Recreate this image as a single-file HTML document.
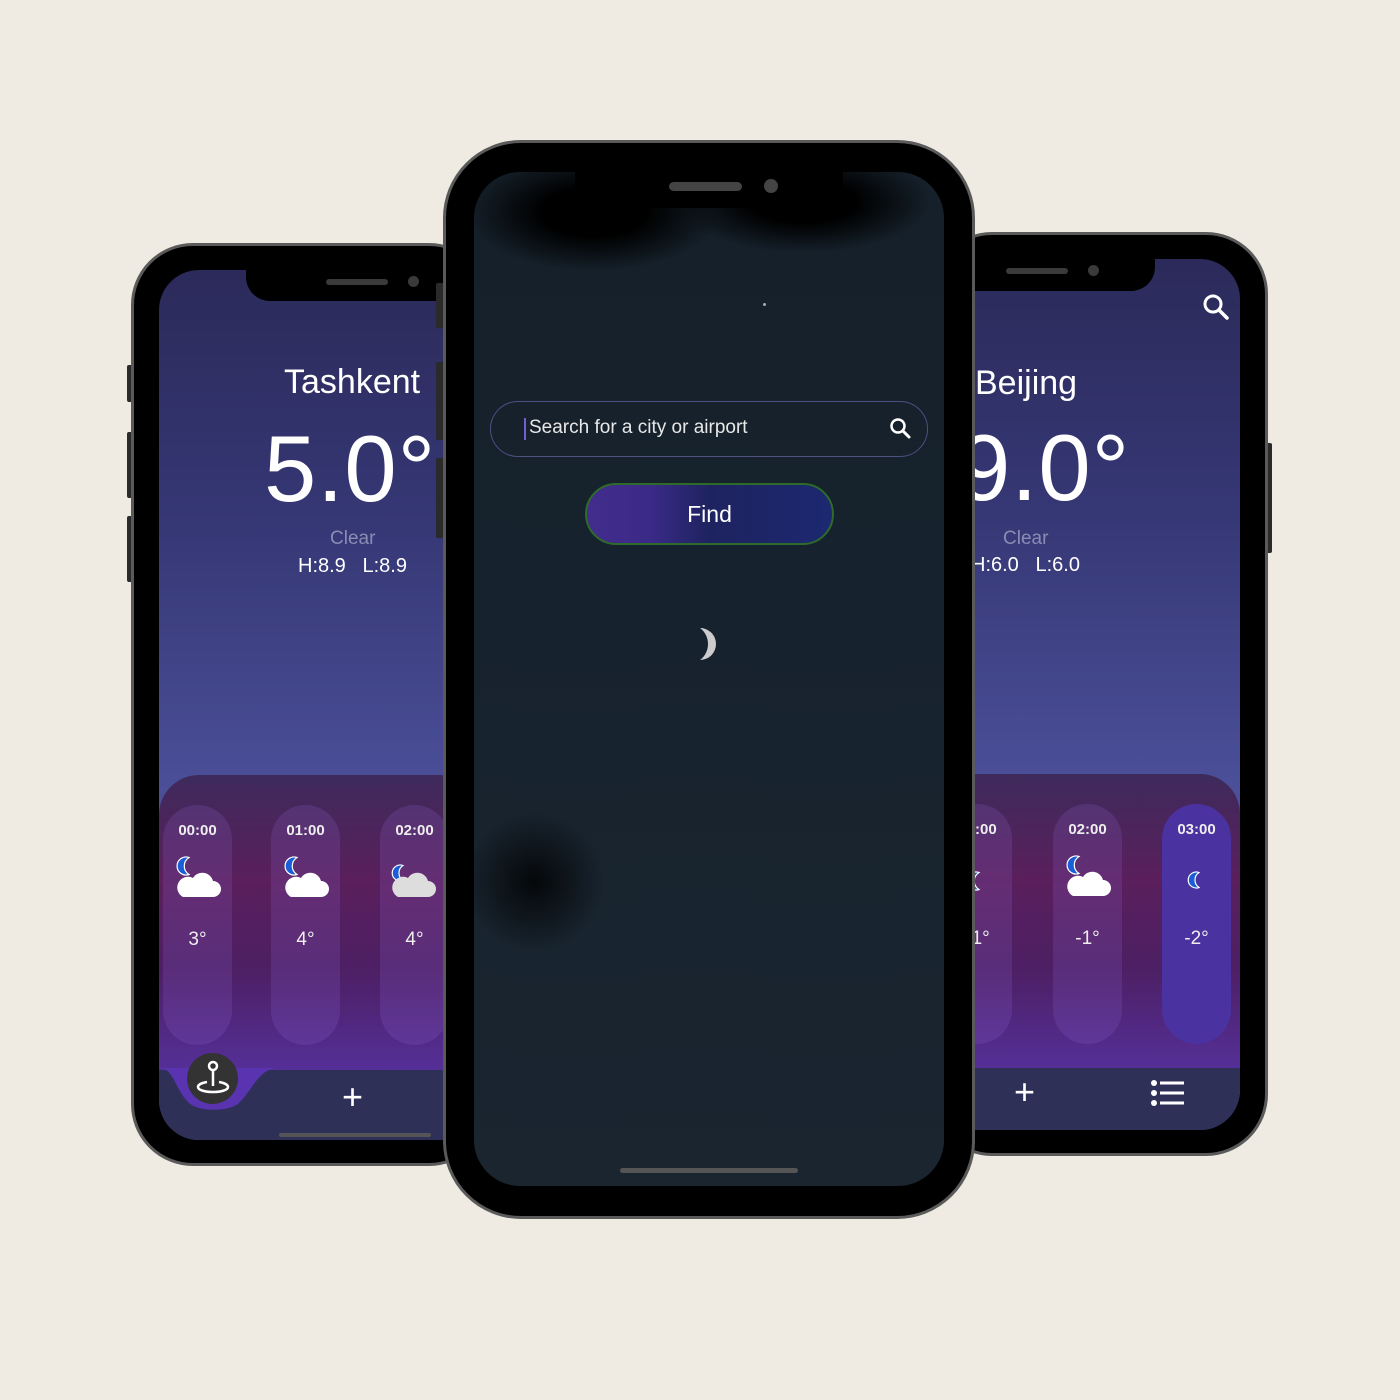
<!DOCTYPE html>
<html><head><style>
*{margin:0;padding:0;box-sizing:border-box}
body{width:1400px;height:1400px;background:#efebe3;position:relative;overflow:hidden;font-family:"Liberation Sans",sans-serif;color:#fff}
.a{position:absolute}
.phone{position:absolute;background:#000;border:3px solid #5a5a5a}
.scr{position:absolute;overflow:hidden}
.sky{background:linear-gradient(180deg,#2b2a5a 0%,#363876 30%,#4b4f98 60%,#5a60ae 100%)}
.notch{position:absolute;background:#000;border-radius:0 0 24px 24px}
.panel{position:absolute;border-radius:40px 40px 0 0;background:linear-gradient(180deg,#3e2a5c 0%,#5a1f5c 35%,#4d1f64 65%,#55309a 100%)}
.card{position:absolute;width:69px;height:240px;border-radius:35px;background:rgba(150,110,220,0.18);text-align:center}
.card .t{margin-top:17px;font-size:15px;font-weight:bold;color:#eee}
.card .d{position:absolute;top:124px;width:100%;font-size:19px;color:#eee}
.tab{position:absolute;background:#2e3058}
.btn{position:absolute;background:#2a2a2a;border-radius:2px}
</style></head><body>

<div class="btn" style="left:127px;top:365px;width:7px;height:37px"></div>
<div class="btn" style="left:127px;top:432px;width:7px;height:66px"></div>
<div class="btn" style="left:127px;top:516px;width:7px;height:66px"></div>
<div class="btn" style="left:1265px;top:443px;width:7px;height:110px"></div>

<!-- LEFT PHONE -->
<div class="phone" style="left:131px;top:243px;width:360px;height:923px;border-radius:62px"></div>
<div class="scr sky" style="left:159px;top:270px;width:320px;height:870px;border-radius:40px 0 0 40px">
  <div class="notch" style="left:87px;top:0;width:230px;height:31px"></div>
  <div class="a" style="left:167px;top:9px;width:62px;height:6px;border-radius:3px;background:#3a3a3a"></div>
  <div class="a" style="left:249px;top:6px;width:11px;height:11px;border-radius:50%;background:#3a3a3a"></div>
  <div class="a" style="left:125px;top:93px;font-size:34px">Tashkent</div>
  <div class="a" style="left:105px;top:145px;font-size:94px;font-weight:300;letter-spacing:1px">5.0°</div>
  <div class="a" style="left:171px;top:258px;font-size:19px;color:#8a8cb4">Clear</div>
  <div class="a" style="left:139px;top:285px;font-size:20px">H:8.9&nbsp;&nbsp;&nbsp;L:8.9</div>
  <div class="panel" style="left:0;top:505px;width:340px;height:300px">
    <div class="card" style="left:4px;top:30px"><div class="t">00:00</div><svg class="a" style="left:10px;top:50px" width="50" height="45"><path d="M16 2.5A9 9 0 1 0 16 19.5A10 10 0 0 1 16 2.5z" fill="#1a5ed8" stroke="#fff" stroke-width="1.2"/><path d="M10 42h30a8 8 0 0 0 0-16a11 11 0 0 0-20-3a8 8 0 0 0-10 19z" fill="#fff"/></svg><div class="d">3°</div></div>
    <div class="card" style="left:112px;top:30px"><div class="t">01:00</div><svg class="a" style="left:10px;top:50px" width="50" height="45"><path d="M16 2.5A9 9 0 1 0 16 19.5A10 10 0 0 1 16 2.5z" fill="#1a5ed8" stroke="#fff" stroke-width="1.2"/><path d="M10 42h30a8 8 0 0 0 0-16a11 11 0 0 0-20-3a8 8 0 0 0-10 19z" fill="#fff"/></svg><div class="d">4°</div></div>
    <div class="card" style="left:221px;top:30px"><div class="t">02:00</div><svg class="a" style="left:8px;top:58px" width="50" height="40"><path d="M15 2.5A8 8 0 1 0 15 17.5A9 9 0 0 1 15 2.5z" fill="#1a5ed8" stroke="#fff" stroke-width="1.2"/><path d="M10 34h30a8 8 0 0 0 0-16a11 11 0 0 0-20-3a8 8 0 0 0-10 19z" fill="#ddd"/></svg><div class="d">4°</div></div>
  </div>
  <div class="tab" style="left:0;top:800px;width:340px;height:70px"></div>
  <svg class="a" style="left:0;top:798px" width="120" height="45"><path d="M0 0H120C100 0 95 20 80 35C70 44 40 44 30 35C15 20 15 0 0 0Z" fill="#5a34b0"/></svg>
  <div class="a" style="left:28px;top:783px;width:51px;height:51px;border-radius:50%;background:#333"></div>
  <svg class="a" style="left:36px;top:788px" width="36" height="40"><circle cx="18" cy="8" r="4" fill="none" stroke="#fff" stroke-width="2.5"/><path d="M18 12v16" stroke="#fff" stroke-width="2.5"/><path d="M12 24c-6 1-9 3-9 5c0 3 7 5 15 5s15-2 15-5c0-2-3-4-9-5" fill="none" stroke="#fff" stroke-width="2.5"/></svg>
  <div class="a" style="left:183px;top:806px;font-size:36px;font-weight:300">+</div>
  <div class="a" style="left:120px;top:863px;width:152px;height:4px;border-radius:2px;background:#555"></div>
</div>

<!-- RIGHT PHONE -->
<div class="phone" style="left:930px;top:232px;width:338px;height:924px;border-radius:62px"></div>
<div class="scr sky" style="left:950px;top:259px;width:290px;height:871px;border-radius:0 40px 40px 0">
  <div class="notch" style="left:0;top:0;width:205px;height:32px"></div>
  <div class="a" style="left:56px;top:9px;width:62px;height:6px;border-radius:3px;background:#3a3a3a"></div>
  <div class="a" style="left:138px;top:6px;width:11px;height:11px;border-radius:50%;background:#3a3a3a"></div>
  <svg class="a" style="left:252px;top:34px" width="28" height="28"><circle cx="11" cy="11" r="8" fill="none" stroke="#fff" stroke-width="3"/><path d="M17 17l8 8" stroke="#fff" stroke-width="3.5" stroke-linecap="round"/></svg>
  <div class="a" style="left:25px;top:105px;font-size:34px">Beijing</div>
  <div class="a" style="left:8px;top:155px;font-size:94px;font-weight:300;letter-spacing:1px">9.0°</div>
  <div class="a" style="left:53px;top:269px;font-size:19px;color:#8a8cb4">Clear</div>
  <div class="a" style="left:21px;top:295px;font-size:20px">H:6.0&nbsp;&nbsp;&nbsp;L:6.0</div>
  <div class="panel" style="left:-50px;top:515px;width:340px;height:300px">
    <div class="card" style="left:43px;top:30px"><div class="t">01:00</div><svg class="a" style="left:20px;top:66px" width="30" height="30"><path d="M16 2.5A9 9 0 1 0 16 19.5A10 10 0 0 1 16 2.5z" fill="#1a5ed8" stroke="#fff" stroke-width="1.2"/></svg><div class="d">-1°</div></div>
    <div class="card" style="left:153px;top:30px"><div class="t">02:00</div><svg class="a" style="left:10px;top:50px" width="50" height="45"><path d="M16 2.5A9 9 0 1 0 16 19.5A10 10 0 0 1 16 2.5z" fill="#1a5ed8" stroke="#fff" stroke-width="1.2"/><path d="M10 42h30a8 8 0 0 0 0-16a11 11 0 0 0-20-3a8 8 0 0 0-10 19z" fill="#fff"/></svg><div class="d">-1°</div></div>
    <div class="card" style="left:262px;top:30px;background:#4a32a0"><div class="t">03:00</div><svg class="a" style="left:22px;top:66px" width="30" height="30"><path d="M15 2.5A8 8 0 1 0 15 17.5A9 9 0 0 1 15 2.5z" fill="#1a5ed8" stroke="#fff" stroke-width="1.2"/></svg><div class="d">-2°</div></div>
  </div>
  <div class="tab" style="left:0;top:809px;width:290px;height:62px"></div>
  <div class="a" style="left:64px;top:812px;font-size:36px;font-weight:300">+</div>
  <svg class="a" style="left:200px;top:820px" width="36" height="30"><g fill="#fff"><circle cx="4" cy="4" r="3"/><circle cx="4" cy="14" r="3"/><circle cx="4" cy="24" r="3"/><rect x="10" y="2.5" width="24" height="3"/><rect x="10" y="12.5" width="24" height="3"/><rect x="10" y="22.5" width="24" height="3"/></g></svg>
</div>

<!-- CENTER PHONE -->
<div class="btn" style="left:436px;top:283px;width:8px;height:45px"></div>
<div class="btn" style="left:436px;top:362px;width:8px;height:78px"></div>
<div class="btn" style="left:436px;top:458px;width:8px;height:80px"></div>
<div class="phone" style="left:443px;top:140px;width:532px;height:1079px;border-radius:78px"></div>
<div class="scr" style="left:474px;top:172px;width:470px;height:1014px;border-radius:46px;background:linear-gradient(180deg,#15202a 0%,#16222d 40%,#1a2530 100%)">
  <div class="a" style="left:0;top:0;width:470px;height:130px;background:radial-gradient(ellipse 150px 70px at 120px 40px,#000 35%,transparent 85%),radial-gradient(ellipse 150px 60px at 330px 30px,#000 35%,transparent 85%)"></div>
  <div class="a" style="left:0;top:640px;width:150px;height:150px;background:radial-gradient(ellipse 70px 70px at 60px 70px,rgba(0,0,0,0.8),transparent)"></div>
  <div class="notch" style="left:101px;top:0;width:268px;height:36px"></div>
  <div class="a" style="left:195px;top:10px;width:73px;height:9px;border-radius:5px;background:#444"></div>
  <div class="a" style="left:290px;top:7px;width:14px;height:14px;border-radius:50%;background:#444"></div>
  <div class="a" style="left:289px;top:131px;width:3px;height:3px;border-radius:50%;background:#aaa"></div>
  <div class="a" style="left:16px;top:229px;width:438px;height:56px;border-radius:28px;border:1.5px solid #4f4f82"></div>
  <div class="a" style="left:50px;top:246px;width:2px;height:22px;background:#7060d0"></div>
  <div class="a" style="left:55px;top:245px;font-size:19px;color:#e8e8e8">Search for a city or airport</div>
  <svg class="a" style="left:414px;top:244px" width="24" height="24"><circle cx="10" cy="10" r="6.5" fill="none" stroke="#fff" stroke-width="2.5"/><path d="M15 15l6 6" stroke="#fff" stroke-width="3" stroke-linecap="round"/></svg>
  <div class="a" style="left:111px;top:311px;width:249px;height:62px;border-radius:31px;border:2px solid #2e6a2a;background:linear-gradient(90deg,#422c8c 0%,#3b2a88 25%,#1e2360 50%,#1c2870 100%);text-align:center;line-height:58px;font-size:23px">Find</div>
  <svg class="a" style="left:220px;top:454px" width="24" height="38"><path d="M6 2A16 16 0 0 1 6 34A20 20 0 0 0 6 2z" fill="#ccc"/></svg>
  <div class="a" style="left:146px;top:996px;width:178px;height:5px;border-radius:3px;background:#555"></div>
</div>
</body></html>
